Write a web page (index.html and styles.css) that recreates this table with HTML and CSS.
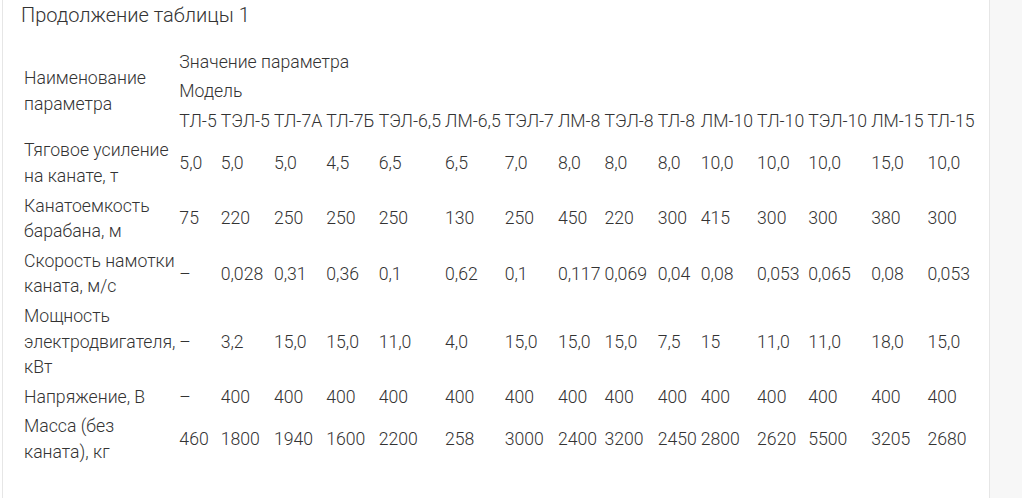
FILE: index.html
```html
<!DOCTYPE html>
<html lang="ru">
<head>
<meta charset="utf-8">
<link rel="stylesheet" href="styles.css">
</head>
<body>
<div class="layout">
  <main class="content">
    <p class="caption">Продолжение таблицы 1</p>
    <table class="spec">
      <tr>
        <td rowspan="3">Наименование<br>параметра</td>
        <td colspan="15">Значение параметра</td>
      </tr>
      <tr><td colspan="15">Модель</td></tr>
      <tr>
        <td>ТЛ-5</td><td>ТЭЛ-5</td><td>ТЛ-7А</td><td>ТЛ-7Б</td><td>ТЭЛ-6,5</td><td>ЛМ-6,5</td><td>ТЭЛ-7</td><td>ЛМ-8</td><td>ТЭЛ-8</td><td>ТЛ-8</td><td>ЛМ-10</td><td>ТЛ-10</td><td>ТЭЛ-10</td><td>ЛМ-15</td><td>ТЛ-15</td>
      </tr>
      <tr>
        <td>Тяговое усиление<br>на канате, т</td>
        <td>5,0</td><td>5,0</td><td>5,0</td><td>4,5</td><td>6,5</td><td>6,5</td><td>7,0</td><td>8,0</td><td>8,0</td><td>8,0</td><td>10,0</td><td>10,0</td><td>10,0</td><td>15,0</td><td>10,0</td>
      </tr>
      <tr>
        <td>Канатоемкость<br>барабана, м</td>
        <td>75</td><td>220</td><td>250</td><td>250</td><td>250</td><td>130</td><td>250</td><td>450</td><td>220</td><td>300</td><td>415</td><td>300</td><td>300</td><td>380</td><td>300</td>
      </tr>
      <tr>
        <td>Скорость намотки<br>каната, м/с</td>
        <td>–</td><td>0,028</td><td>0,31</td><td>0,36</td><td>0,1</td><td>0,62</td><td>0,1</td><td>0,117</td><td>0,069</td><td>0,04</td><td>0,08</td><td>0,053</td><td>0,065</td><td>0,08</td><td>0,053</td>
      </tr>
      <tr>
        <td>Мощность<br>электродвигателя,<br>кВт</td>
        <td>–</td><td>3,2</td><td>15,0</td><td>15,0</td><td>11,0</td><td>4,0</td><td>15,0</td><td>15,0</td><td>15,0</td><td>7,5</td><td>15</td><td>11,0</td><td>11,0</td><td>18,0</td><td>15,0</td>
      </tr>
      <tr>
        <td>Напряжение, В</td>
        <td>–</td><td>400</td><td>400</td><td>400</td><td>400</td><td>400</td><td>400</td><td>400</td><td>400</td><td>400</td><td>400</td><td>400</td><td>400</td><td>400</td><td>400</td>
      </tr>
      <tr>
        <td>Масса (без<br>каната), кг</td>
        <td>460</td><td>1800</td><td>1940</td><td>1600</td><td>2200</td><td>258</td><td>3000</td><td>2400</td><td>3200</td><td>2450</td><td>2800</td><td>2620</td><td>5500</td><td>3205</td><td>2680</td>
      </tr>
    </table>
  </main>
  <aside class="side"></aside>
</div>
</body>
</html>
```

FILE: styles.css
```css
html, body {
  margin: 0;
  padding: 0;
  height: 100%;
  background: #ffffff;
}
body {
  font-family: Roboto, "Liberation Sans", sans-serif;
  font-weight: 300;
  font-size: 17.65px;
  line-height: 25.6px;
  color: #333333;
}
.layout {
  display: flex;
  min-height: 100%;
  padding-left: 2px;
}
.content {
  width: 988px;
  box-sizing: border-box;
  border-left: 1px solid #e6e6e6;
  border-right: 1px solid #e6e6e6;
  padding: 3px 18px 0 18px;
  background: #ffffff;
}
.side {
  flex: 1;
  background: #f7f7f7;
}
.caption {
  margin: 0 0 18px 0;
  font-size: 20px;
}
.spec {
  border-collapse: separate;
  border-spacing: 2px;
  font-size: 17.65px;
}
.spec td {
  padding: 1px;
  vertical-align: middle;
  text-align: left;
  white-space: nowrap;
}
```
